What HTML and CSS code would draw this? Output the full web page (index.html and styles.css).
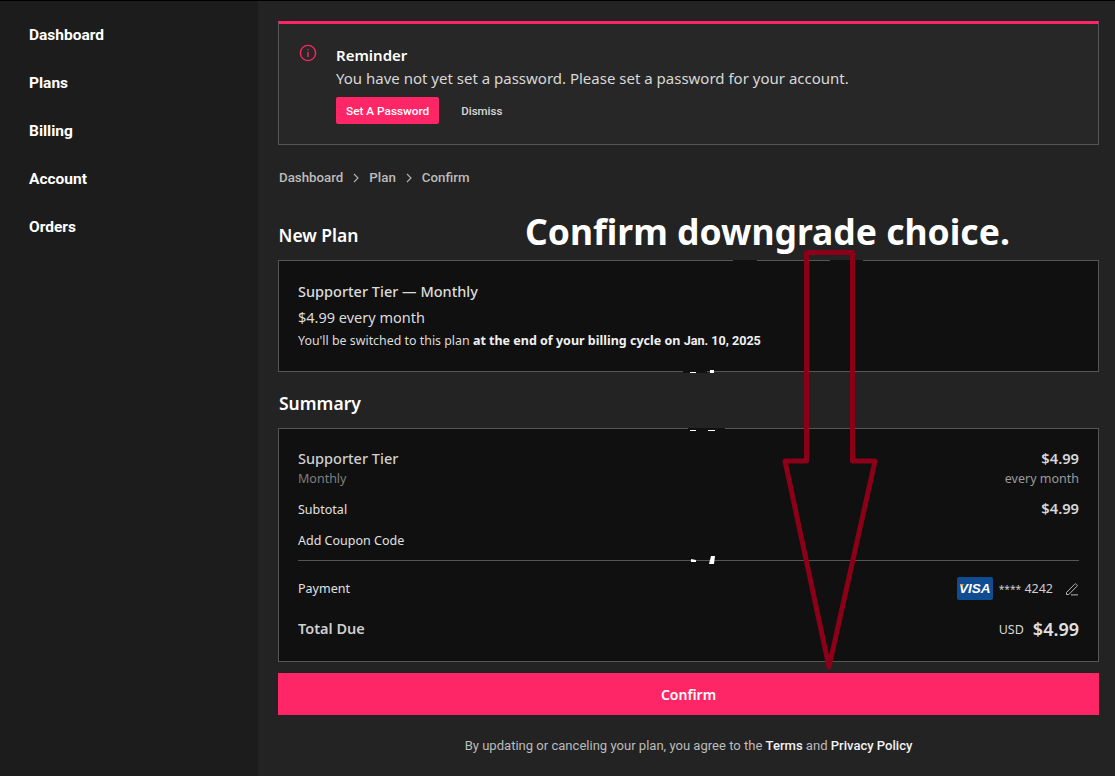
FILE: index.html
```html
<!DOCTYPE html>
<html lang="en">
<head>
<meta charset="utf-8">
<title>Confirm plan</title>
<link rel="stylesheet" href="styles.css">
</head>
<body>
<div class="app">
  <nav class="sidebar">
    <a class="nav-link">Dashboard</a>
    <a class="nav-link">Plans</a>
    <a class="nav-link">Billing</a>
    <a class="nav-link">Account</a>
    <a class="nav-link">Orders</a>
  </nav>
  <main class="main">
    <section class="alert">
      <svg class="alert-icon" viewBox="0 0 18 18" width="18" height="18" fill="none" stroke="#ff2667" stroke-width="1.4" stroke-linecap="round"><circle cx="9" cy="9" r="7.6"/><path d="M9 8.4v4M9 5.4v.4"/></svg>
      <div class="alert-body">
        <div class="alert-title">Reminder</div>
        <div class="alert-text">You have not yet set a password. Please set a password for your account.</div>
        <div class="alert-actions">
          <span class="btn-small">Set A Password</span>
          <span class="btn-ghost">Dismiss</span>
        </div>
      </div>
    </section>
    <div class="crumbs">
      <span>Dashboard</span>
      <svg class="chev" viewBox="0 0 6 10" width="6" height="10" fill="none" stroke="#b5b5b5" stroke-width="1.1"><path d="M1 1l4 4-4 4"/></svg>
      <span>Plan</span>
      <svg class="chev" viewBox="0 0 6 10" width="6" height="10" fill="none" stroke="#b5b5b5" stroke-width="1.1"><path d="M1 1l4 4-4 4"/></svg>
      <span>Confirm</span>
    </div>
    <h2 class="section-title first">New Plan</h2>
    <section class="card plan-card">
      <div class="plan-name">Supporter Tier — Monthly</div>
      <div class="plan-price">$4.99 every month</div>
      <div class="plan-note">You'll be switched to this plan <b>at the end of your billing cycle on <span class="date">Jan. 10, 2025</span></b></div>
    </section>
    <h2 class="section-title">Summary</h2>
    <section class="card summary-card">
      <div class="row tier-row">
        <div>
          <div class="tier-name">Supporter Tier</div>
          <div class="muted">Monthly</div>
        </div>
        <div class="right">
          <div class="price">$4.99</div>
          <div class="muted-light">every month</div>
        </div>
      </div>
      <div class="row subtotal-row">
        <span class="small subtotal-label">Subtotal</span>
        <span class="price">$4.99</span>
      </div>
      <div class="coupon small">Add Coupon Code</div>
      <div class="row payment-row">
        <span class="small">Payment</span>
        <span class="pay">
          <span class="visa">VISA</span>
          <span class="digits"><span class="stars">****</span> 4242</span>
          <svg class="pencil" viewBox="0 0 14 14" width="14" height="14" fill="none" stroke="#b8b8b8" stroke-width="1"><path d="M1.5 10.5L9.6 2.2a1.2 1.2 0 0 1 1.7 0l.5.5a1.2 1.2 0 0 1 0 1.7L3.8 12.5H1.5zM6 12.9h7"/></svg>
        </span>
      </div>
      <div class="row total-row">
        <span class="total-label">Total Due</span>
        <span class="total"><span class="usd">USD</span><span class="total-price">$4.99</span></span>
      </div>
    </section>
    <button class="confirm">Confirm</button>
    <p class="legal">By updating or canceling your plan, you agree to the <b>Terms</b> and <b>Privacy Policy</b></p>
  </main>
</div>
<div class="annotation-title">Confirm downgrade choice.</div>
<svg class="annotation" viewBox="0 0 1115 776" width="1115" height="776">
  <g fill="#111">
    <rect x="733" y="260" width="24" height="2"/>
    <rect x="830" y="260" width="33" height="2"/>
    <rect x="683" y="371" width="24" height="2"/>
    <rect x="688" y="428" width="37" height="2"/>
  </g>
  <g fill="#fff">
    <rect x="690" y="372" width="6" height="1"/>
    <rect x="710" y="370" width="4" height="3"/>
    <rect x="690" y="430" width="6" height="1"/>
    <rect x="708" y="430" width="7" height="1"/>
    <path d="M691 559L696 560V562H691Z"/>
    <path d="M711 556H715L714 564H709Z"/>
  </g>
  <path d="M806.5 252.5H852.5V461H875L829 667L785 461H806.5Z" fill="none" stroke="#8b0018" stroke-width="5" stroke-linejoin="round"/>
</svg>
</body>
</html>
```
FILE: styles.css
```css
* { box-sizing: border-box; }
html, body { margin: 0; padding: 0; height: 100%; overflow: hidden; }
body {
  background: #232323;
  color: #e6e6e6;
  font-family: "Noto Sans", "Open Sans", sans-serif;
  border-top: 1px solid #000;
  position: relative;
}
.app { display: flex; height: 775px; }
.sidebar {
  width: 258px;
  flex: none;
  background: #1c1c1c;
  padding: 24px 0 0 29px;
  display: flex;
  flex-direction: column;
  gap: 28px;
}
.nav-link {
  font-family: Roboto, sans-serif;
  font-weight: 700;
  font-size: 15.5px;
  line-height: 20px;
  color: #fff;
}
.main { flex: 1; padding: 20px 16px 0 20px; min-width: 0; }
.alert {
  height: 124px;
  background: #272727;
  border: 1px solid #555;
  border-top: 3px solid #ff2667;
  display: flex;
  padding: 20px 0 0 20px;
  gap: 19px;
}
.alert-icon { flex: none; margin-top: 0; }
.alert-title { font-size: 15px; line-height: 20px; font-weight: 600; color: #fff; margin-top: 1px; }
.alert-text { font-size: 15px; line-height: 22px; color: #d8d8d8; margin-top: 2px; }
.alert-actions { display: flex; align-items: center; gap: 22px; margin-top: 8px; }
.btn-small {
  background: #ff2667;
  color: #fff;
  font-family: Roboto, sans-serif;
  font-weight: 500;
  font-size: 11.8px;
  line-height: 26px;
  padding: 1px 10px 0;
  border-radius: 2px;
}
.btn-ghost { font-family: Roboto, sans-serif; font-weight: 500; font-size: 11.5px; color: #d8d8d8; }
.crumbs {
  display: flex;
  align-items: center;
  gap: 10px;
  margin-top: 24px;
  padding-left: 1px;
  font-family: Roboto, sans-serif;
  font-weight: 500;
  font-size: 13.3px;
  line-height: 18px;
  color: #bcbcbc;
}
.crumbs span { display: block; }
.section-title { margin: 0; padding-left: 1px; font-size: 17.5px; line-height: 24px; font-weight: 600; color: #fff; }
.section-title.first { margin-top: 36px; padding-left: 0.5px; }
.plan-card + .section-title { margin-top: 19px; }
.card { background: #101010; border: 1px solid #555; padding: 0 19px; }
.plan-card { height: 112px; margin-top: 13px; padding-top: 20px; }
.plan-name { font-size: 14.5px; line-height: 20px; font-weight: 500; color: #dcdcdc; }
.plan-price { font-size: 14.5px; line-height: 20px; color: #dcdcdc; margin-top: 6px; }
.plan-note { font-size: 12.4px; line-height: 18px; color: #dcdcdc; margin-top: 5px; }
.plan-note b { font-size: 12.5px; font-weight: 700; color: #f0f0f0; }
.date { font-family: Roboto, sans-serif; font-weight: 700; font-size: 12.6px; }
.summary-card { height: 234px; margin-top: 13px; padding-top: 20px; }
.row { display: flex; justify-content: space-between; }
.tier-name { font-size: 14.5px; line-height: 19px; font-weight: 500; color: #cfcfcf; }
.muted { font-size: 12.5px; line-height: 18px; color: #7f7f7f; margin-top: 2px; }
.right { text-align: right; }
.price { font-size: 14.7px; line-height: 19px; font-weight: 600; color: #d8d8d8; }
.muted-light { font-size: 12.5px; line-height: 18px; color: #9a9a9a; margin-top: 2px; }
.small { font-size: 12.5px; line-height: 18px; color: #e0e0e0; }
.subtotal-row { margin-top: 11px; }
.subtotal-label { margin-top: 2px; }
.coupon { margin-top: 13px; padding-bottom: 10px; border-bottom: 1px solid #555; }
.payment-row { align-items: center; margin-top: 15px; height: 25px; }
.pay { display: flex; align-items: center; }
.visa {
  position: relative;
  width: 36px;
  height: 23px;
  border-radius: 2px;
  background: #0f4c91;
  color: #fff;
  font-family: "Liberation Sans", sans-serif;
  font-style: italic;
  font-weight: 700;
  font-size: 13.5px;
  line-height: 23px;
  text-align: center;
}
.visa::before {
  content: "";
  position: absolute;
  left: 3px;
  top: 7px;
  border-top: 2px solid #e8a22b;
  border-right: 5px solid transparent;
}
.digits { font-size: 12.5px; color: #cfcfcf; margin-left: 6px; }
.stars { font-size: 10.2px; }
.pencil { margin-left: 12px; }
.total-row { align-items: center; margin-top: 14px; height: 27px; }
.total-label { font-size: 14.5px; font-weight: 600; color: #cfcfcf; margin-bottom: 2px; }
.total { display: flex; align-items: center; gap: 8px; }
.usd { font-size: 12.5px; color: #d8d8d8; margin-top: 2px; margin-right: 1px; }
.total-price { font-size: 18px; font-weight: 600; color: #e0e0e0; }
.confirm {
  display: block;
  width: 100%;
  height: 42px;
  margin-top: 11px;
  border: 0;
  background: #ff2667;
  color: #fff;
  font-family: "Noto Sans", sans-serif;
  font-weight: 600;
  font-size: 14px;
}
.legal {
  margin: 22px 0 0;
  text-align: center;
  font-family: Roboto, sans-serif;
  font-size: 13.05px;
  line-height: 18px;
  color: #bcbcbc;
}
.legal b { font-weight: 500; color: #f2f2f2; }
.annotation-title {
  position: absolute;
  left: 525px;
  top: 206px;
  font-family: "Noto Sans", sans-serif;
  font-weight: 700;
  font-size: 35.5px;
  line-height: 48px;
  color: #fff;
  white-space: nowrap;
}
.annotation { position: absolute; left: 0; top: -1px; pointer-events: none; }
```
